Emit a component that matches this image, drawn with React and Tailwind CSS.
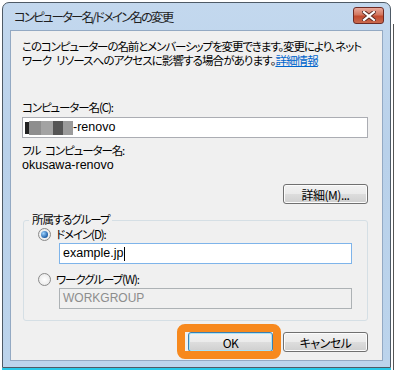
import React from 'react';

const jp = {
  fontFamily: '"Noto Sans CJK JP", "Liberation Sans", sans-serif',
};

function WinButton({ children, focused }) {
  return (
    <div
      className={`flex items-center justify-center h-[20px] w-[85px] rounded-[3px] border text-[12px] text-black tracking-[-0.5px] ${
        focused ? 'border-[#3c7fb1] shadow-[inset_0_0_0_1px_#a9e3f8]' : 'border-[#707070] shadow-[inset_0_0_0_1px_#fcfcfc]'
      } bg-[linear-gradient(#f2f2f2_0%,#ebebeb_48%,#dddddd_52%,#cfcfcf_100%)]`}
    >
      {children}
    </div>
  );
}

function Radio({ checked }) {
  return (
    <div className="w-[13px] h-[13px] rounded-full border border-[#8a8a8a] bg-[radial-gradient(circle,#ffffff_0%,#e3e3e3_100%)] flex items-center justify-center">
      {checked && (
        <div className="w-[7px] h-[7px] rounded-full bg-[radial-gradient(circle_at_35%_35%,#9fd4ff_0%,#1f5fa8_70%,#0b3d80_100%)]" />
      )}
    </div>
  );
}

export default function App() {
  return (
    <div className="w-[395px] h-[370px] bg-white relative overflow-hidden [font-feature-settings:'palt']" style={jp}>
      <div className="absolute right-[1px] top-[24px] bottom-0 w-[1px] bg-[#555]" />
      <div className="ml-[2px] mt-[2px] w-[389px] h-[366px] rounded-t-[7px] border border-[#4e5a66] bg-[linear-gradient(180deg,#c3d8ee_0%,#b9d1ea_40%,#bcd4ec_100%)] flex flex-col shadow-[0_2px_0_#27c8e8]">
        {/* title bar */}
        <div className="h-[27px] flex items-center justify-between pl-[11px] pr-[6px]">
          <span className="text-[12.5px] text-[#1e1e1e] mt-[1px] whitespace-nowrap tracking-[-1.9px]">コンピューター名/ドメイン名の変更</span>
          <div className="w-[31px] h-[17px] mt-[-2px] rounded-[3px] border border-[#6d2b25] bg-[linear-gradient(180deg,#e9a99c_0%,#d3775f_45%,#c24a2e_55%,#c96a4e_100%)] flex items-center justify-center">
            <svg width="14" height="10" viewBox="0 0 14 10">
              <path d="M2 1 L12 9 M12 1 L2 9" stroke="#5a2a22" strokeWidth="4" strokeLinecap="square" />
              <path d="M2 1 L12 9 M12 1 L2 9" stroke="#ffffff" strokeWidth="2.2" strokeLinecap="square" />
            </svg>
          </div>
        </div>
        {/* client area */}
        <div className="mx-[7px] mb-[6px] flex-1 border border-[#93a9c3] bg-[#f0f0f0] pl-[11px] pr-[14px] pt-[8px] text-[11.5px] text-black leading-[15px] tracking-[-1.1px]">
          <p className="leading-[14px] whitespace-nowrap">
            このコンピューターの名前とメンバーシップを変更できます。変更により、ネット
            <br />
            <span className="tracking-[-0.9px]">
              ワーク<span className="inline-block w-[5px]"> </span>リソースへのアクセスに影響する場合があります。<span className="text-[#0066cc] underline">詳細情報</span>
            </span>
          </p>

          <div className="mt-[33px]">コンピューター名(C):</div>
          <div className="mt-[2px] h-[21px] border border-[#abadb3] bg-white flex items-center px-[2px]">
            <div className="flex h-[14px] items-center">
              <div className="w-[4px] h-[12px] bg-[#222]" />
              <div className="w-[12px] h-[14px] bg-[#8e8e8e]" />
              <div className="w-[12px] h-[14px] bg-[#a3a3a3]" />
              <div className="w-[10px] h-[14px] bg-[#555]" />
              <div className="w-[10px] h-[14px] bg-[#9b9b9b]" />
            </div>
            <span className="font-['Liberation_Sans'] text-[12.5px] tracking-normal">-renovo</span>
          </div>

          <div className="mt-[5px]">
            フル<span className="inline-block w-[5px]"> </span>コンピューター名:
          </div>
          <div className="font-['Liberation_Sans'] text-[12.5px] tracking-normal">okusawa-renovo</div>

          <div className="flex justify-end mt-[11px]">
            <WinButton>詳細(M)...</WinButton>
          </div>

          {/* group box */}
          <div className="relative mt-[16px] ml-[1px] h-[101px] rounded-[3px] border border-[#d5dfe5] pl-[14px] pr-[15px] pt-[6px]">
            <div className="absolute -top-[9px] left-[5px] bg-[#f0f0f0] px-[3px] leading-[15px]">所属するグループ</div>
            <div className="flex items-center gap-[5px] h-[15px]">
              <Radio checked />
              <span>ドメイン(D):</span>
            </div>
            <div className="ml-[21px] mt-[1px] h-[21px] border border-[#7eb4ea] bg-white flex items-center px-[3px]">
              <span className="font-['Liberation_Sans'] text-[12.5px] tracking-normal">example.jp</span>
              <div className="w-[1px] h-[14px] bg-black ml-[1px]" />
            </div>
            <div className="flex items-center gap-[5px] mt-[8px] h-[15px]">
              <Radio />
              <span>ワークグループ(W):</span>
            </div>
            <div className="ml-[21px] mt-[1px] h-[21px] border border-[#adb2b5] bg-[#f0f0f0] flex items-center px-[3px]">
              <span className="font-['Liberation_Sans'] text-[12px] text-[#8d8d8d] tracking-normal">WORKGROUP</span>
            </div>
          </div>

          <div className="flex justify-end gap-[10px] mt-[11px]">
            <div className="relative">
              <div className="absolute -top-[8px] -bottom-[7px] -left-[11px] -right-[8px] rounded-[8px] border-[8px] border-[#f7891e]" />
              <WinButton focused>OK</WinButton>
            </div>
            <WinButton>キャンセル</WinButton>
          </div>
        </div>
      </div>
    </div>
  );
}
